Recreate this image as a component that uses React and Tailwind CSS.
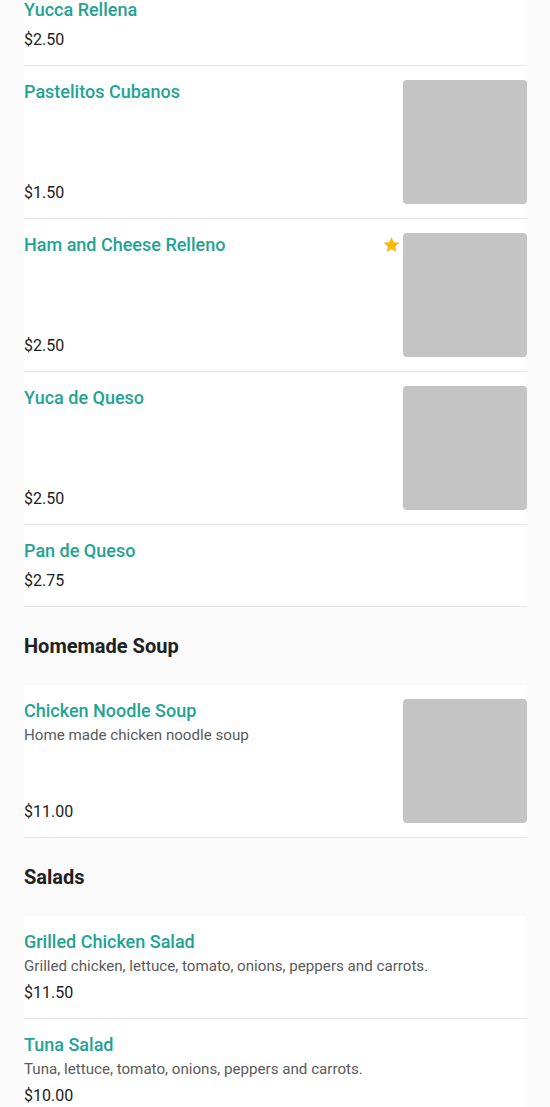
import React from "react";

const Star = () => (
  <svg width="19" height="19" viewBox="0 0 24 24" className="mt-[2px] mr-[2px] shrink-0">
    <path
      d="M12 2.5l2.9 6.6 7.1.6-5.4 4.7 1.6 7-6.2-3.7-6.2 3.7 1.6-7L2 9.7l7.1-.6z"
      fill="#f8b90c"
    />
  </svg>
);

function Item({ title, desc, price, image, star }) {
  return (
    <div className="flex border-b border-[#e6e6e6] py-[14px]">
      <div className="flex flex-1 flex-col">
        <div className="text-[18px] leading-[24px] font-medium text-[#1fa393]">{title}</div>
        {desc && (
          <div className="mt-[2px] text-[15.15px] leading-[20px] text-[#5a5a5a]">{desc}</div>
        )}
        <div
          className={
            "text-[16px] text-[#212121] " +
            (image
              ? "mt-auto leading-[22px]"
              : desc
              ? "mt-[5px] leading-[23px]"
              : "mt-[6px] leading-[23px]")
          }
        >
          {price}
        </div>
      </div>
      {image && (
        <div className="flex items-start">
          {star && <Star />}
          <div className="h-[124px] w-[124px] rounded-[4px] bg-[#c4c4c4]" />
        </div>
      )}
    </div>
  );
}

function Heading({ children }) {
  return (
    <div className="py-6 text-[20px] leading-[30px] font-bold text-[#212121]">{children}</div>
  );
}

export default function App() {
  return (
    <div className="min-h-screen bg-[#fafafa] pl-6 pr-[23px] font-['Roboto',sans-serif]">
      <div className="-mt-[16px] bg-white">
        <Item title="Yucca Rellena" price="$2.50" />
        <Item title="Pastelitos Cubanos" price="$1.50" image />
        <Item title="Ham and Cheese Relleno" price="$2.50" image star />
        <Item title="Yuca de Queso" price="$2.50" image />
        <Item title="Pan de Queso" price="$2.75" />
      </div>
      <Heading>Homemade Soup</Heading>
      <div className="bg-white">
        <Item
          title="Chicken Noodle Soup"
          desc="Home made chicken noodle soup"
          price="$11.00"
          image
        />
      </div>
      <Heading>Salads</Heading>
      <div className="bg-white">
        <Item
          title="Grilled Chicken Salad"
          desc="Grilled chicken, lettuce, tomato, onions, peppers and carrots."
          price="$11.50"
        />
        <Item
          title="Tuna Salad"
          desc="Tuna, lettuce, tomato, onions, peppers and carrots."
          price="$10.00"
        />
      </div>
    </div>
  );
}
